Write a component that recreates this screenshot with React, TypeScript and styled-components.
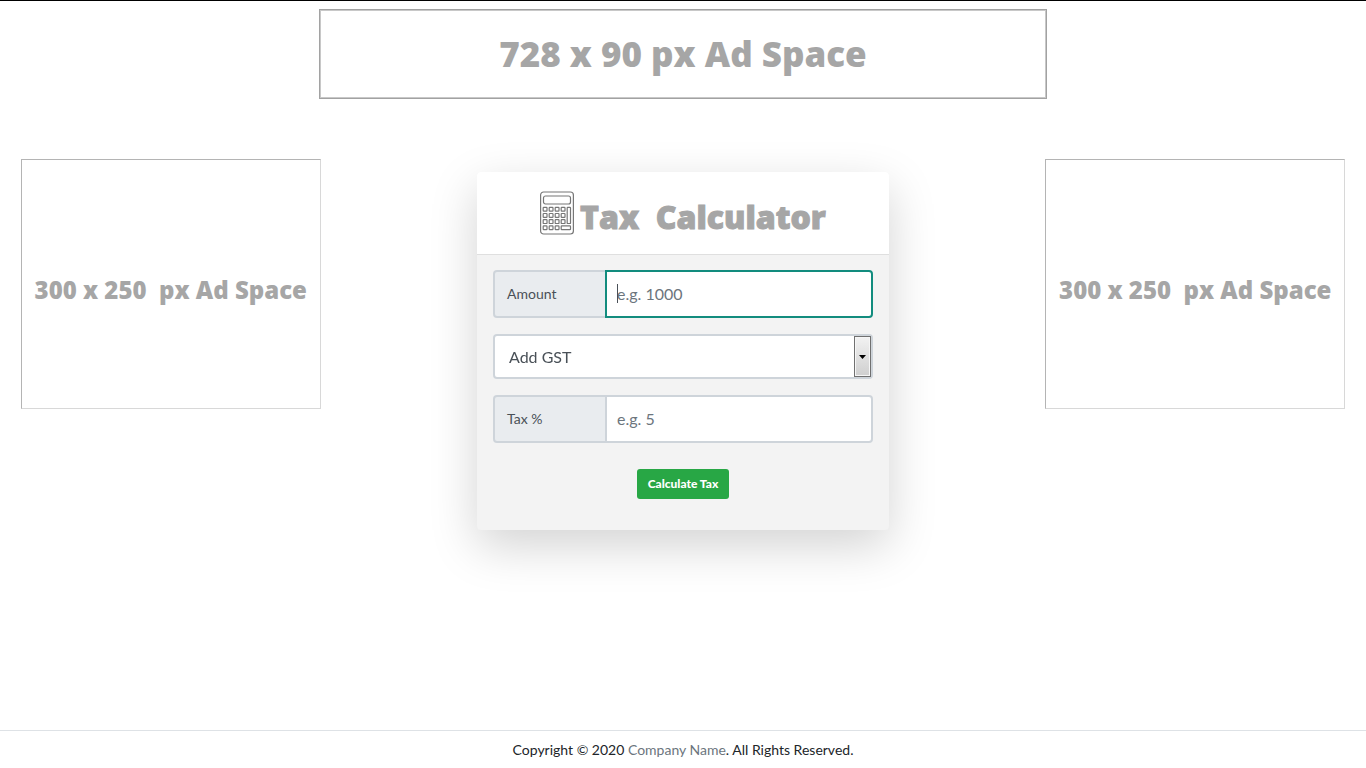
import React, { useState } from "react";
import styled, { createGlobalStyle } from "styled-components";

const GlobalStyle = createGlobalStyle`
  *, *::before, *::after { box-sizing: border-box; }
  body {
    margin: 0;
    background: #fff;
    color: #212529;
    font-family: Lato, "Open Sans", sans-serif;
    font-size: 16px;
    line-height: 24px;
  }
`;

const Page = styled.div`
  display: flex;
  flex-direction: column;
  min-height: 100vh;
  border-top: 1px solid #000;
`;

const Banner = styled.header`
  display: flex;
  justify-content: center;
  padding: 8px 16px 60px;
`;

const AdBox = styled.aside<{ $size: "banner" | "side" }>`
  display: flex;
  align-items: center;
  justify-content: center;
  width: 100%;
  max-width: ${(p) => (p.$size === "banner" ? "728px" : "300px")};
  min-height: ${(p) => (p.$size === "banner" ? "90px" : "250px")};
  border: 1px solid ${(p) => (p.$size === "banner" ? "#a2a2a2" : "#d8d8d8")};
  border-top-color: ${(p) => (p.$size === "banner" ? "#a2a2a2" : "#b4b4b4")};
  border-left-color: ${(p) => (p.$size === "banner" ? "#a2a2a2" : "#b4b4b4")};
  box-shadow: ${(p) => (p.$size === "banner" ? "inset 0 0 0 1px #c8c8c8" : "none")};
  padding-top: ${(p) => (p.$size === "banner" ? "0" : "12px")};
  color: #a6a6a6;
  font-family: "Open Sans", sans-serif;
  font-size: ${(p) => (p.$size === "banner" ? "35px" : "24px")};
  font-weight: 800;
  white-space: pre;
`;

const Columns = styled.main`
  display: grid;
  grid-template-columns: 1fr 2fr 1fr;
  flex: 1;
  align-items: start;
`;

const Column = styled.div`
  display: flex;
  justify-content: center;
  padding: 0 16px;
`;

const Card = styled.section`
  width: 100%;
  max-width: 412px;
  margin: 13px 0 48px;
  border-radius: 4px;
  background: #f3f3f3;
  box-shadow: 0 16px 48px rgba(0, 0, 0, 0.175);
`;

const CardHeader = styled.div`
  display: flex;
  align-items: center;
  justify-content: center;
  gap: 6px;
  height: 83px;
  border-bottom: 1px solid #dfdfdf;
  border-radius: 4px 4px 0 0;
  background: #fff;
`;

const Title = styled.h1`
  margin: 0;
  padding-top: 8px;
  color: #a6a6a6;
  font-family: "Open Sans", sans-serif;
  font-size: 32px;
  font-weight: 800;
  line-height: 40px;
  white-space: pre;
  -webkit-text-stroke: 1px #a6a6a6;
  stroke-linejoin: round;
`;

const Form = styled.form`
  display: flex;
  flex-direction: column;
  gap: 16px;
  padding: 15px 16px 31px;
`;

const Field = styled.div`
  position: relative;
  display: flex;
  height: 48px;
`;

const FieldLabel = styled.label`
  display: flex;
  align-items: center;
  width: 114px;
  padding: 0 12px;
  border: 2px solid #ced4da;
  border-radius: 4px 0 0 4px;
  background: #e9ecef;
  color: #495057;
  font-size: 14px;
`;

const Caret = styled.span`
  position: absolute;
  top: 14px;
  left: 124px;
  display: none;
  width: 1px;
  height: 19px;
  background: #495057;
  pointer-events: none;
`;

const Input = styled.input`
  position: relative;
  flex: 1;
  min-width: 0;
  margin-left: -2px;
  padding: 0 10px;
  border: 2px solid #ced4da;
  border-radius: 0 4px 4px 0;
  outline: none;
  background: #fff;
  color: #495057;
  font: inherit;

  &::placeholder { color: #6c757d; opacity: 1; }
  &:focus { border-color: #128c7e; }
  &:focus:placeholder-shown { caret-color: transparent; }
  &:focus:placeholder-shown + ${Caret} { display: block; }
`;

const SelectWrap = styled.div`
  position: relative;
  display: flex;
`;

const Select = styled.select`
  width: 100%;
  height: 45px;
  padding: 0 32px 0 14px;
  appearance: none;
  border: 2px solid #ced4da;
  border-radius: 4px;
  background: #fff;
  color: #495057;
  font: inherit;
`;

const SelectArrow = styled.span`
  position: absolute;
  top: 2px;
  right: 2px;
  bottom: 2px;
  display: flex;
  align-items: center;
  justify-content: center;
  width: 17px;
  border: 1px solid #707070;
  background: linear-gradient(#f2f2f2, #cfcfcf);
  box-shadow: inset 0 0 0 1px #f6f6f6;
  pointer-events: none;
`;

const Submit = styled.button`
  align-self: center;
  width: 92px;
  height: 30px;
  margin-top: 10px;
  padding: 0;
  border: 0;
  border-radius: 3px;
  background: #28a745;
  color: #fff;
  font: 900 12px/18px Lato, sans-serif;
  cursor: pointer;
`;

const Footer = styled.footer`
  padding: 8px 16px 7px;
  border-top: 1px solid #dee2e6;
  font-size: 14px;
  line-height: 22px;
  text-align: center;
`;

const FooterLink = styled.a`
  color: #6c757d;
  text-decoration: none;
`;

const keys = [0, 1, 2, 3].flatMap((row) => [0, 1, 2, 3].map((col) => ({ row, col })))
  .filter(({ row, col }) => !(row === 3 && col === 3));

const CalculatorIcon = () => (
  <svg width="34" height="44" viewBox="0 0 34 44" fill="none" stroke="#777" strokeWidth="1.2" aria-hidden="true">
    <rect x="0.6" y="1" width="32.8" height="42" rx="3" />
    <rect x="3.5" y="5" width="27" height="8" rx="2" />
    {keys.map(({ row, col }) => (
      <rect key={`${row}-${col}`} x={3.2 + col * 6} y={16.3 + row * 6.2} width="3.8" height="3.8" rx="0.6" />
    ))}
    <rect x="27.2" y="16.3" width="3.3" height="16.2" rx="0.6" />
    <rect x="21.2" y="34.9" width="9.3" height="3.8" rx="0.6" />
  </svg>
);

export default function App() {
  const [mode, setMode] = useState("add");
  return (
    <>
      <GlobalStyle />
      <Page>
        <Banner>
          <AdBox $size="banner">728 x 90 px Ad Space</AdBox>
        </Banner>
        <Columns>
          <Column>
            <AdBox $size="side">{"300 x 250  px Ad Space"}</AdBox>
          </Column>
          <Column>
            <Card>
              <CardHeader>
                <CalculatorIcon />
                <Title>{"Tax  Calculator"}</Title>
              </CardHeader>
              <Form onSubmit={(e) => e.preventDefault()}>
                <Field>
                  <FieldLabel htmlFor="amount">Amount</FieldLabel>
                  <Input id="amount" placeholder="e.g. 1000" inputMode="decimal" autoFocus />
                  <Caret aria-hidden="true" />
                </Field>
                <SelectWrap>
                  <Select aria-label="GST mode" value={mode} onChange={(e) => setMode(e.target.value)}>
                    <option value="add">Add GST</option>
                    <option value="remove">Remove GST</option>
                  </Select>
                  <SelectArrow aria-hidden="true">
                    <svg width="7" height="4" viewBox="0 0 7 4"><path d="M0 0h7L3.5 4z" fill="#000" /></svg>
                  </SelectArrow>
                </SelectWrap>
                <Field>
                  <FieldLabel htmlFor="tax">Tax %</FieldLabel>
                  <Input id="tax" placeholder="e.g. 5" inputMode="decimal" />
                  <Caret aria-hidden="true" />
                </Field>
                <Submit type="submit">Calculate Tax</Submit>
              </Form>
            </Card>
          </Column>
          <Column>
            <AdBox $size="side">{"300 x 250  px Ad Space"}</AdBox>
          </Column>
        </Columns>
        <Footer>
          Copyright © 2020 <FooterLink href="#">Company Name</FooterLink>. All Rights Reserved.
        </Footer>
      </Page>
    </>
  );
}
